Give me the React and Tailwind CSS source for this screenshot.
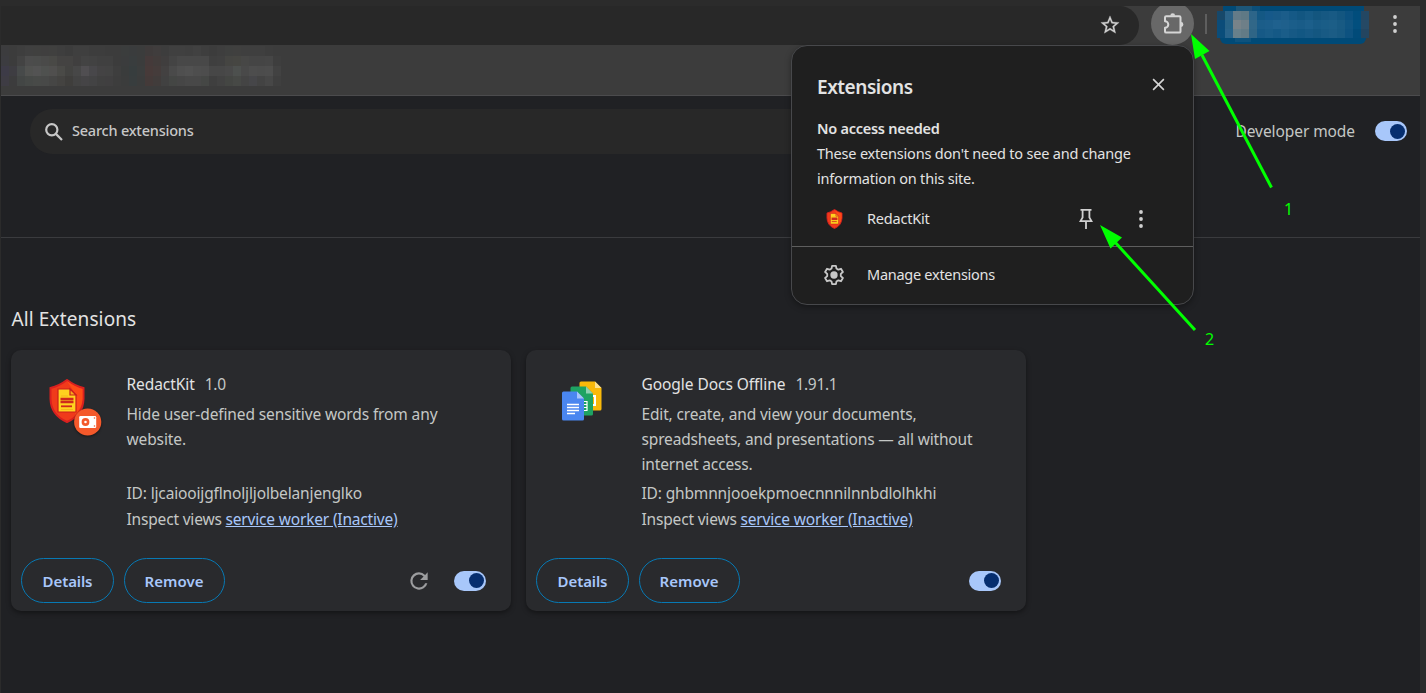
import React from "react";

const BOOKMARK_ROWS = [
  ["#3c3c3e","#3c3c3c","#3e3e3e","#404040","#40403f","#403f3f","#40403f","#3e3e3e","#3c3c3c","#3f3f3f","#3f3f3f","#3d3d3d","#3d3d3d","#3c3c3c","#3c3c3c","#3b3d3d","#3a3c3d","#3b3c3c","#3f3b3b","#403d3d","#3d3d3d","#404040","#404040","#3f3f3f","#414141","#3e3e3e","#3c3c3c","#3e3e3e","#3f403f","#40403f","#3f3f3f","#3f3f3f","#3f3f3f","#3d3d3d","#3c3c3c"],
  ["#3c3c40","#3c3c3c","#434343","#4c4c4c","#4b4c4b","#4a4a49","#494946","#444342","#444342","#403f3f","#434343","#424242","#404040","#404040","#3c3c3c","#3b3c3d","#393d3e","#3b3c3c","#453a3a","#423c3b","#403e3e","#444444","#484848","#484848","#484848","#484848","#3f3f3f","#404040","#454542","#464642","#474746","#454545","#454545","#464646","#3e3e3e"],
  ["#3d3b47","#3e3d42","#474a4a","#515250","#535353","#4f514f","#504f4e","#4a4a47","#434341","#474747","#504e51","#48474a","#444344","#434343","#3e3e3e","#3a3c3c","#373d3e","#3b3d3d","#473a39","#453c3b","#434141","#4a4a4a","#4f4f4f","#515151","#4e4e4e","#4d4d4d","#474747","#474747","#494949","#4d504e","#494949","#4d4d4d","#4c4c4c","#4d4d4d","#424242"],
  ["#3e3c44","#3c3c3d","#434645","#464947","#484a48","#484948","#464645","#444341","#3f3e3c","#434343","#454446","#434344","#404040","#403f40","#3d3d3d","#3b3c3c","#383d3e","#3b3c3c","#443a39","#413c3b","#414141","#444644","#464646","#484848","#484848","#454745","#3f3f3f","#424242","#444643","#474946","#444444","#464649","#434343","#474747","#3f3f3f"],
];

const PROFILE_ROWS = [
  ["#17486a","#2a6288","#647b88","#5f7985","#2d6589","#145884","#16598a","#185a88","#1b5d8a","#155986","#125681","#165a85","#13567f","#165882","#185a84","#135680","#0b5180","#014d7c","#234763"],
  ["#0b4c79","#266286","#788389","#6e7f88","#316788","#1b5d89","#1c5e8b","#1f618e","#1f608c","#1b5e8a","#195c88","#1c5f8b","#185b86","#1a5d87","#1c5e87","#185a83","#0f5481","#024f7e","#254965"],
  ["#0a4d7a","#28638a","#68808b","#637b86","#2f6586","#165986","#195c88","#155986","#1a5d89","#165985","#125783","#165985","#145781","#185a84","#1b5c85","#175982","#0d5280","#014b79","#234560"],
];

function Mosaic({ rows, cell }) {
  return (
    <div className="flex flex-col">
      {rows.map((row, y) => (
        <div key={y} className="flex">
          {row.map((color, x) => (
            <span key={x} className={cell} style={{ backgroundColor: color }} />
          ))}
        </div>
      ))}
    </div>
  );
}

function ProfileChip() {
  return (
    <div className="ml-[10px] flex h-[39px] w-[152px] flex-col items-center self-start">
      <div className="flex h-[5px] w-[141px] bg-[#004a77] pl-[13px]">
        <span className="h-full w-4 bg-[#1c5679]" />
        <span className="h-full w-2 bg-[#0c4f7a]" />
      </div>
      <Mosaic rows={PROFILE_ROWS} cell="h-[9px] w-2" />
      <div className="flex h-1.5 w-[146px] rounded-b-[18px] bg-[#004a77] pl-[15px]">
        <span className="h-1 w-4 bg-[#0d527d]" />
      </div>
    </div>
  );
}

function Star() {
  return (
    <svg className="mb-[2px] size-[22px]" viewBox="0 0 24 24" fill="#d0d0d0">
      <path stroke="#d0d0d0" strokeWidth=".3" d="M22 9.24l-7.19-.62L12 2 9.19 8.63 2 9.24l5.46 4.73L5.82 21 12 17.27 18.18 21l-1.63-7.03L22 9.24zM12 15.4l-3.76 2.27 1-4.28-3.32-2.88 4.38-.38L12 6.1l1.71 4.04 4.38.38-3.32 2.88 1 4.28L12 15.4z" />
    </svg>
  );
}

function Puzzle() {
  return (
    <svg className="ml-[3px] mt-px size-6" viewBox="0 0 24 24" fill="none" stroke="#d6d6d6" strokeWidth="2" strokeLinejoin="round">
      <path d="M4.200 4.200H17.300a1.200 1.200 0 0 1 1.200 1.200V19.400a1.200 1.200 0 0 1-1.200 1.200H4.200a1.200 1.200 0 0 1-1.200-1.200v-3.600a2.900 2.900 0 0 0 0-6.600V5.400a1.200 1.200 0 0 1 1.200-1.200z" />
      <path d="M8.300 3.700a2.400 2.400 0 0 1 4.800 0zM19 10.100a2.400 2.400 0 0 1 0 4.800z" fill="#d6d6d6" stroke="none" />
    </svg>
  );
}

function Dots({ className }) {
  return (
    <svg className={className} viewBox="0 0 4 18" fill="#d0d0d0">
      <circle cx="2" cy="2" r="1.9" />
      <circle cx="2" cy="9" r="1.9" />
      <circle cx="2" cy="16" r="1.9" />
    </svg>
  );
}

function Shield({ className }) {
  return (
    <svg className={className} viewBox="0 0 36 44">
      <path d="M18 1 Q26 7 34.5 9 V20 Q34 36 18 43 Q2 36 1.500 20 V9 Q10 7 18 1z" fill="#f03a1b" stroke="#d8201f" strokeWidth="2" />
      <path d="M18 2 Q26 8 33.500 10 V20 Q33 29 26 35.500 L27 16z" fill="#ff4b17" />
      <path d="M9 10 H21 L27 16 V33 H9z" fill="#ffd21f" stroke="#c91f1c" strokeWidth="1.200" />
      <path d="M21 10 V16 H27z" fill="#f7a81b" stroke="#c91f1c" strokeWidth="1.200" />
      <path d="M11.500 20 H24.500 M11.500 23 H24.500" stroke="#cf2a1c" strokeWidth="2.600" />
      <path d="M12 27.300 H23" stroke="#cf2a1c" strokeWidth="1.800" />
      <path d="M12 17 H19 M12 30.500 H24" stroke="#f7b51b" strokeWidth="1.200" />
    </svg>
  );
}

function UnpackedBadge() {
  return (
    <svg className="absolute left-[25px] top-[29px] size-7 drop-shadow-[0_1px_1px_rgba(0,0,0,0.5)]" viewBox="0 0 28 28">
      <circle cx="13.700" cy="14" r="13.600" fill="#f4592b" />
      <rect x="5.200" y="8" width="17" height="12" rx="1.300" fill="#fff" />
      <circle cx="11.500" cy="14" r="2.600" fill="#fff" stroke="#f4592b" strokeWidth="2.600" />
      <circle cx="20.500" cy="10" r=".8" fill="#f4592b" />
      <circle cx="20.500" cy="18" r=".8" fill="#f4592b" />
    </svg>
  );
}

function DocsLogo() {
  return (
    <svg className="h-10 w-10" viewBox="0 0 40 40">
      <path d="M19 .5 H33 L39.500 7 V28 Q39.500 29.500 38 29.500 H19 Q17.500 29.500 17.500 28 V2 Q17.500 .5 19 .5z" fill="#f9b90a" />
      <path d="M33 .5 L39.500 7 H33z" fill="#fde293" />
      <rect x="26" y="15" width="7" height="9" fill="none" stroke="#fff" strokeWidth="2" />
      <path d="M10 5.500 H24 L31 12.500 V33 Q31 34.500 29.500 34.500 H10 Q8.500 34.500 8.500 33 V7 Q8.500 5.500 10 5.500z" fill="#1ea362" />
      <path d="M24 5.500 L31 12.500 H24z" fill="#8ed1b1" />
      <path d="M20 20.500 H25 V29.500 H20 M20 23.500 H25 M20 26.500 H25" fill="none" stroke="#fff" strokeWidth="1.200" />
      <path d="M1.500 10.500 H15 L22 17.500 V38 Q22 39.500 20.500 39.500 H1.500 Q0 39.500 0 38 V12 Q0 10.500 1.500 10.500z" fill="#4a86f0" />
      <path d="M15 10.500 L22 17.500 H15z" fill="#a6c5fa" />
      <path d="M5 23.500 H17 M5 26.500 H17 M5 29.500 H17 M5 32.500 H13" stroke="#fff" strokeWidth="1.400" />
    </svg>
  );
}

function Toggle() {
  return (
    <span className="flex h-5 w-8 shrink-0 items-center justify-end rounded-full bg-[#a8c7fa] pr-0.5">
      <span className="size-[15px] rounded-full bg-[#062e6f]" />
    </span>
  );
}

function Reload() {
  return (
    <svg className="size-[26px]" viewBox="0 0 24 24" fill="#9c9d9f">
      <path d="M17.650 6.350A7.960 7.960 0 0 0 12 4a8 8 0 1 0 7.730 10h-2.080A6 6 0 1 1 12 6c1.660 0 3.140.69 4.220 1.780L13 11h7V4z" />
    </svg>
  );
}

function ExtensionCard({ icon, name, version, description, id, reload, tracking }) {
  return (
    <article className="flex h-[261px] w-[500px] flex-col rounded-[10px] bg-[#292a2d] shadow-[0_2px_5px_rgba(0,0,0,0.4)]">
      <div className="flex h-[187px] pt-[21px]">
        <div className="w-[115.5px] shrink-0">{icon}</div>
        <div className="text-[15.5px] text-[#c4c7c5]">
          <div className="flex h-[31px] leading-[26px]">
            <span className="tracking-[-0.06px] text-[#e3e3e3]">{name}</span>
            <span className="ml-2.5 tracking-[-0.3px]">{version}</span>
          </div>
          <div className={"h-[78px] leading-[25px] " + tracking}>
            {description.map((line) => (
              <div key={line} className="whitespace-nowrap">{line}</div>
            ))}
          </div>
          <div className="h-[26px] leading-[26px] tracking-[-0.15px]">ID: {id}</div>
          <div className="leading-[26px] tracking-[-0.18px]">
            Inspect views <a className="text-[#a8c7fa] underline">service worker (Inactive)</a>
          </div>
        </div>
      </div>
      <div className="mt-[21px] flex h-[45px] items-center gap-2.5 pl-2.5 pr-[25px]">
        <button className="h-[45px] w-[93px] rounded-full border border-[#0779b4] pt-px text-[15px] font-semibold tracking-[-0.1px] text-[#a8c7fa]">Details</button>
        <button className="h-[45px] w-[101px] rounded-full border border-[#0779b4] pr-px pt-px text-[15px] font-semibold tracking-[0.05px] text-[#a8c7fa]">Remove</button>
        <div className="ml-auto flex items-center gap-[22px]">
          {reload && <Reload />}
          <Toggle />
        </div>
      </div>
    </article>
  );
}

function ExtensionsMenu() {
  return (
    <section className="absolute left-[791px] top-[45px] h-[260px] w-[403px] rounded-[16px] border border-[#47484b] bg-[#1f1f1f] text-[14.5px] tracking-[-0.2px] text-[#e3e3e3] shadow-[0_2px_6px_rgba(0,0,0,0.35)]">
      <div className="flex h-[201px] flex-col border-b border-[#5e5e5e] pl-[25px]">
        <div className="flex items-start justify-between pr-[28px] pt-[28px]">
          <h2 className="text-[19px] font-semibold leading-[26px] tracking-[-0.46px]">Extensions</h2>
          <svg className="mt-1 size-[13px]" viewBox="0 0 14 14" stroke="#d6d6d6" strokeWidth="1.700">
            <path d="M1.200 1.200 12.800 12.800M12.800 1.200 1.200 12.800" />
          </svg>
        </div>
        <h3 className="mt-4 font-semibold leading-[25px] tracking-[-0.26px]">No access needed</h3>
        <p className="leading-[25px]">These extensions don't need to see and change<br />information on this site.</p>
        <div className="mt-[15px] flex h-[25px] items-center">
          <Shield className="ml-[9px] mr-6 h-5 w-[17px]" />
          <span>RedactKit</span>
          <svg className="ml-auto h-[22px] w-[14px]" viewBox="0 0 14 22" fill="none" stroke="#d0d0d0" strokeWidth="1.800">
            <path d="M1.500 1.900H12.500M3.600 2V9.500L1.500 13.100H12.500L10.400 9.500V2M7 13V21" />
          </svg>
          <Dots className="ml-[46px] mr-[50px] h-[18px] w-1" />
        </div>
      </div>
      <div className="flex h-[56px] items-center pl-[31px]">
        <svg className="size-[22px]" viewBox="0 0 24 24" fill="none" stroke="#c7c7c7" strokeWidth="2">
          <path strokeLinejoin="round" d="M9.900 2h4.200l.6 3 2 1.200 2.900-1 2.100 3.600-2.300 2v2.400l2.300 2-2.100 3.600-2.900-1-2 1.200-.6 3H9.900l-.6-3-2-1.200-2.900 1-2.100-3.600 2.300-2v-2.400l-2.300-2 2.100-3.600 2.900 1 2-1.200z" />
          <circle cx="12" cy="12" r="4" fill="#c7c7c7" stroke="none" />
        </svg>
        <span className="ml-[22px] tracking-[-0.27px]">Manage extensions</span>
      </div>
    </section>
  );
}

function Annotations() {
  return (
    <>
      <svg className="absolute left-0 top-0 h-[693px] w-[1426px]" viewBox="0 0 1426 693" fill="#00ff00" stroke="#00ff00">
        <path d="M1271.500 187.500 1202 55M1195 330 1114 241" strokeWidth="3" />
        <path stroke="none" d="M1191 34 1209.500 51 1195 59zM1100 225 1122 237.500 1110.500 248.500z" />
      </svg>
      <span className="absolute left-[1284px] top-[199px] text-[16px] leading-5 text-[#00ff00]">1</span>
      <span className="absolute left-[1205px] top-[329px] text-[16px] leading-5 text-[#00ff00]">2</span>
    </>
  );
}

export default function App() {
  return (
    <div className="relative flex h-[693px] w-[1426px] flex-col overflow-hidden bg-[#2b2b2b] pl-px pr-1.5 pt-1.5 font-['Noto_Sans',sans-serif]">
      <header className="flex h-[39px] items-center bg-[#3c3c3c]">
        <div className="flex h-full w-[1138px] items-center justify-end rounded-r-full bg-[#282828] pr-[18.5px]">
          <Star />
        </div>
        <div className="ml-3 flex h-[39px] w-[43px] items-end justify-center overflow-hidden">
          <span className="flex size-[43px] shrink-0 items-center justify-center rounded-full bg-[#686868]"><Puzzle /></span>
        </div>
        <span className="mb-[3px] ml-[11px] h-5 w-0.5 bg-[#5e5e5e]" />
        <ProfileChip />
        <Dots className="mb-1 ml-[24px] h-[18px] w-1" />
      </header>
      <div className="h-[51px] border-b border-[#4b4b4d] bg-[#3c3c3c] pt-px">
        <Mosaic rows={BOOKMARK_ROWS} cell="h-[10px] w-2" />
      </div>
      <main className="flex-1 bg-[#202124]">
        <div className="flex h-[142px] items-start justify-between border-b border-[#3a3b3e] pl-[29px] pr-[13px] pt-[13px]">
          <div className="flex h-[45px] w-[850px] items-center rounded-full bg-[#282828] pl-[15px] text-[#c7c7c7]">
            <svg className="size-[18px]" viewBox="0 0 18 18" fill="none" stroke="#c7c7c7" strokeWidth="2.200">
              <circle cx="6.800" cy="6.800" r="5.600" />
              <path d="M10.900 10.900 17 17" />
            </svg>
            <span className="mb-0.5 ml-[9px] text-[14.5px] font-medium tracking-[-0.22px]">Search extensions</span>
          </div>
          <div className="flex h-[44px] items-center gap-5 text-[15.5px] tracking-[-0.08px] text-[#c4c7c5]">
            <span className="pt-px">Developer mode</span>
            <Toggle />
          </div>
        </div>
        <h1 className="mt-[67px] pl-[10.5px] text-[19px] leading-[28px] tracking-[0.12px] text-[#e3e3e3]">All Extensions</h1>
        <div className="mt-[17px] flex gap-[15px] pl-2.5">
          <ExtensionCard
            icon={<div className="relative ml-[37.5px] mt-2"><Shield className="h-[44px] w-9" /><UnpackedBadge /></div>}
            name="RedactKit" version="1.0"
            description={["Hide user-defined sensitive words from any", "website."]}
            id="ljcaiooijgflnoljljolbelanjenglko" reload
            tracking="tracking-[-0.12px]"
          />
          <ExtensionCard
            icon={<div className="ml-[35.5px] mt-[9.5px]"><DocsLogo /></div>}
            name="Google Docs Offline" version="1.91.1"
            description={["Edit, create, and view your documents,", "spreadsheets, and presentations — all without", "internet access."]}
            id="ghbmnnjooekpmoecnnnilnnbdlolhkhi"
            tracking="tracking-[-0.16px]"
          />
        </div>
      </main>
      <ExtensionsMenu />
      <Annotations />
    </div>
  );
}
